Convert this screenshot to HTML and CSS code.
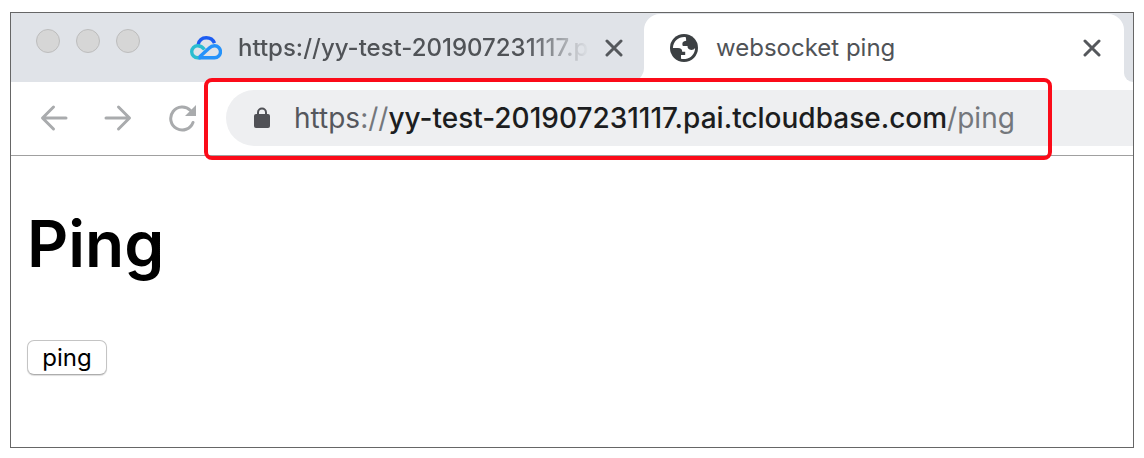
FILE: index.html
```html
<!DOCTYPE html>
<html lang="en">
<head>
<meta charset="utf-8">
<title>websocket ping</title>
<link rel="stylesheet" href="styles.css">
</head>
<body>
<div class="browser">
  <header class="tab-strip">
    <div class="window-controls">
      <button class="dot" aria-label="Close window"></button>
      <button class="dot" aria-label="Minimize window"></button>
      <button class="dot" aria-label="Zoom window"></button>
    </div>
    <div class="tab tab-idle">
      <svg class="cloud" viewBox="0 0 32 24" fill="none" stroke-width="3.400" aria-hidden="true">
        <path d="M8 9C9 4.500 12.200 1.800 16.300 1.800c3.700 0 6.800 2 8.200 5.400" stroke="#1c5cf2"/>
        <path d="M14.500 13.500C12.500 11 10.500 9.700 7.700 9.700A6 6 0 0 0 7.700 21.700h3" stroke="#2bbdd0"/>
        <path d="M8.500 21.700H24.500A6 6 0 0 0 24.500 9.700c-2.500 0-4 1-5.500 2.500L9.500 21" stroke="#2592fa"/>
      </svg>
      <span class="tab-title tab-title-faded">https://yy-test-201907231117.p</span>
      <button class="close" aria-label="Close tab"><svg viewBox="0 0 18 18"><path d="M2 2l14 14M16 2L2 16"/></svg></button>
    </div>
    <div class="tab tab-active">
      <svg class="globe" viewBox="0 0 28 28" aria-hidden="true">
        <circle cx="14" cy="14" r="14" fill="#3c4043"/>
        <path d="M15.800 3.200C9 2.400 3.300 7 2.900 14H8c3 0 4.200 1.200 4.200 3.700h3v3.300h-4.200v3.700c1.300.4 3 .5 4.500.3 5.600-.8 9.500-5.200 9.600-11-.8 1.300-2.200 1.900-3.800 1.900-2.500 0-3.800-1.300-3.800-3.800h-4.600c-1.400-3 .2-5.200 3.300-5.300 0-1.400-.2-2.500-.4-3.600z" fill="#fff"/>
      </svg>
      <span class="tab-title">websocket ping</span>
      <button class="close" aria-label="Close tab"><svg viewBox="0 0 18 18"><path d="M2 2l14 14M16 2L2 16"/></svg></button>
    </div>
    <div class="tab-rest"></div>
  </header>
  <nav class="toolbar">
    <div class="nav-buttons">
      <button class="nav" aria-label="Back"><svg viewBox="0 0 28 28"><path d="M26 14H3M13.500 3L2.500 14l11 11"/></svg></button>
      <button class="nav" aria-label="Forward"><svg viewBox="0 0 28 28"><path d="M2 14h23M14.500 3l11 11-11 11"/></svg></button>
      <button class="nav" aria-label="Reload"><svg viewBox="0 0 28 28"><path d="M25 18.500A11.500 11.500 0 1 1 22.500 6.500"/><path class="solid" d="M28 1v11H17z"/></svg></button>
    </div>
    <div class="address">
      <svg class="lock" viewBox="0 0 16 22" aria-hidden="true"><rect y="7" width="16" height="14" rx="2" fill="#505156"/><path d="M4 8V5.500a4 4 0 0 1 8 0V8" fill="none" stroke="#505156" stroke-width="2"/></svg>
      <div class="url" role="textbox" contenteditable="true" spellcheck="false" aria-label="Address"><span class="scheme">https</span><span class="muted">://</span>yy-test-201907231117.pai.tcloudbase.com<span class="muted">/ping</span></div>
      <div class="highlight"></div>
    </div>
  </nav>
  <main class="page">
    <h1 class="heading">Ping</h1>
    <button class="ping">ping</button>
  </main>
</div>
</body>
</html>
```
FILE: styles.css
```css
* { box-sizing: border-box; }
body {
  margin: 0;
  padding: 12px 10px 10px;
  min-height: 100vh;
  display: flex;
  background: #fff;
  font-family: Inter, "Liberation Sans", sans-serif;
}
button {
  padding: 0;
  border: 0;
  background: none;
  font: inherit;
}
svg { display: block; }
.browser {
  flex: 1;
  min-width: 0;
  display: flex;
  flex-direction: column;
  border: 1px solid #666;
  overflow: hidden;
}
.tab-strip {
  display: flex;
  height: 69px;
  padding-top: 1px;
  background: linear-gradient(#e0e3e8 40px, #fff 40px);
}
.window-controls {
  display: flex;
  gap: 16px;
  padding: 15px 38px 0 25px;
  background: #e0e3e8;
}
.dot {
  width: 24px;
  height: 24px;
  border: 1px solid #bdbdbd;
  border-radius: 50%;
  background: #d6d6d6;
}
.tab {
  display: flex;
  align-items: center;
  color: #505357;
  font-size: 24px;
  line-height: 32px;
}
.tab-idle {
  width: 466px;
  padding: 0 21px 0 12px;
  border-bottom-right-radius: 14px;
  background: #e0e3e8;
}
.tab-active {
  flex: 1;
  padding: 0 23px 0 26px;
  border-radius: 16px 16px 0 0;
  background: #fff;
}
.tab-rest {
  width: 9px;
  border-bottom-left-radius: 14px;
  background: #e0e3e8;
}
.tab-title {
  flex: 1;
  min-width: 0;
  overflow: hidden;
  white-space: nowrap;
}
.tab-title-faded {
  margin-right: 16px;
  font-weight: 500;
  -webkit-mask-image: linear-gradient(to right, #000 82%, transparent);
  mask-image: linear-gradient(to right, #000 82%, transparent);
}
.cloud { width: 32px; height: 24px; margin-right: 16px; }
.globe { width: 28px; height: 28px; margin-right: 18px; }
.close svg {
  width: 18px;
  height: 18px;
  stroke: #55585c;
  stroke-width: 3;
  stroke-linecap: round;
}
.toolbar {
  display: flex;
  padding: 8px 0 9px 29px;
  border-bottom: 1px solid #a0a0a0;
}
.nav-buttons {
  display: flex;
  align-items: center;
  gap: 36px;
  margin-right: 30px;
}
.nav svg {
  width: 28px;
  height: 28px;
  fill: none;
  stroke: #a9abad;
  stroke-width: 3;
  stroke-linecap: round;
  stroke-linejoin: round;
}
.nav .solid { fill: #a9abad; stroke: none; }
.address {
  position: relative;
  flex: 1;
  display: flex;
  align-items: center;
  height: 56px;
  padding-left: 28px;
  border-radius: 28px 0 0 28px;
  background: #eeeff1;
}
.lock { width: 16px; height: 22px; margin-right: 24px; }
.url {
  color: #1c1d20;
  font-size: 28px;
  font-weight: 500;
  line-height: 36px;
  white-space: nowrap;
  outline: 0;
}
.scheme { color: #55575d; font-weight: 400; }
.muted { color: #74777c; font-weight: 400; }
.highlight {
  position: absolute;
  inset: -12px 81px -14px -22px;
  border: 4px solid #fb0b19;
  border-radius: 8px;
  pointer-events: none;
}
.page { padding: 48px 16px; }
.heading {
  margin: 0 0 56px;
  font-size: 64px;
  font-weight: 600;
  line-height: 80px;
}
.ping {
  height: 35px;
  min-width: 80px;
  padding: 0 14px;
  border: 1px solid #c4c4c4;
  border-bottom-color: #adadad;
  border-radius: 7px;
  background: #fff;
  color: #000;
  font-size: 24px;
  line-height: 32px;
  box-shadow: 0 1px 1px #ddd;
}
```
